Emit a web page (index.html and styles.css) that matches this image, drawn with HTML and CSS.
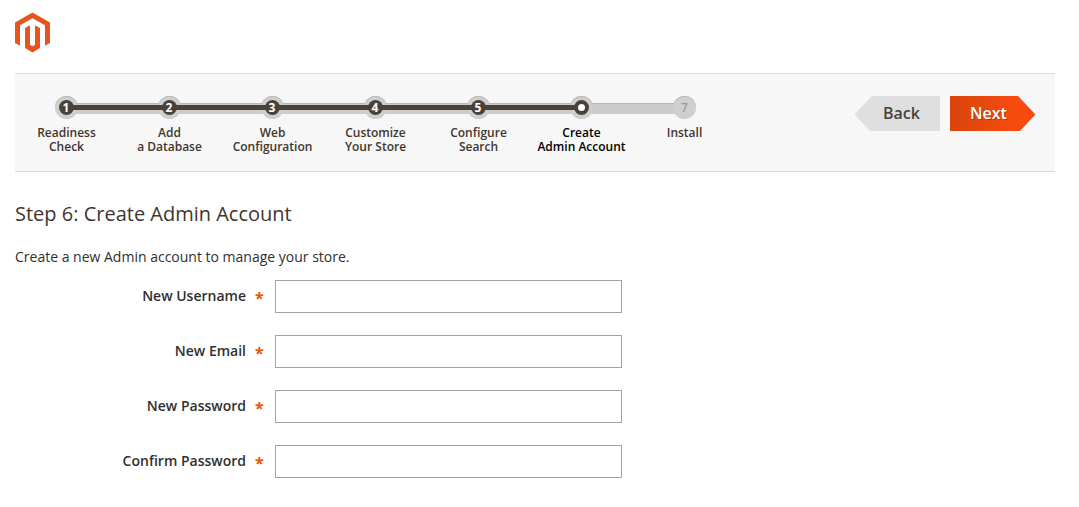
FILE: index.html
```
<!DOCTYPE html>
<html lang="en">
<head>
<meta charset="utf-8">
<title>Create Admin Account</title>
<link rel="stylesheet" href="styles.css">
</head>
<body>
<header class="logo">
  <svg width="35" height="41" viewBox="0 0 35 41" fill="#e85420" aria-label="Magento">
    <path d="M17.5.5 35 10.6V31l-5 2.7V13.3L17.5 6.3 5 13.3v20.4L0 31V10.6Z"/>
    <path d="M10 16 15 13.2V32.7L17.5 34.2 20 32.7V13.2L25 16V36.1L17.5 40.4 10 36.1Z"/>
  </svg>
</header>
<nav class="bar">
  <ol class="steps">
    <li class="step done"><span class="dot"><b>1</b></span><span class="name">Readiness<br>Check</span></li>
    <li class="step done"><span class="dot"><b>2</b></span><span class="name">Add<br>a Database</span></li>
    <li class="step done"><span class="dot"><b>3</b></span><span class="name">Web<br>Configuration</span></li>
    <li class="step done"><span class="dot"><b>4</b></span><span class="name">Customize<br>Your Store</span></li>
    <li class="step done"><span class="dot"><b>5</b></span><span class="name">Configure<br>Search</span></li>
    <li class="step active"><span class="dot"><b></b></span><span class="name">Create<br>Admin Account</span></li>
    <li class="step"><span class="dot"><b>7</b></span><span class="name">Install</span></li>
  </ol>
  <div class="actions">
    <button class="btn back">Back</button>
    <button class="btn next">Next</button>
  </div>
</nav>
<main>
  <h1 class="title">Step 6: Create Admin Account</h1>
  <p class="intro">Create a new Admin account to manage your store.</p>
  <form class="form">
    <div class="row"><label for="u">New Username</label><span class="req">*</span><input id="u" type="text"></div>
    <div class="row"><label for="e">New Email</label><span class="req">*</span><input id="e" type="text"></div>
    <div class="row"><label for="p">New Password</label><span class="req">*</span><input id="p" type="password"></div>
    <div class="row"><label for="c">Confirm Password</label><span class="req">*</span><input id="c" type="password"></div>
  </form>
</main>
</body>
</html>
```
FILE: styles.css
```
* { box-sizing: border-box; }
body {
  margin: 0;
  padding: 12px 24px 0 15px;
  background: #fff;
  color: #303030;
  font: 14px/19px "Open Sans", "Noto Sans", sans-serif;
}
.logo { height: 61px; }
.logo svg { display: block; }
.bar {
  display: flex;
  justify-content: space-between;
  height: 99px;
  padding: 22px 20px 0 0;
  background: #f7f7f7;
  border-top: 1px solid #dcdcdc;
  border-bottom: 1px solid #dcdcdc;
}
.steps {
  display: flex;
  margin: 0;
  padding: 0;
  list-style: none;
}
.step {
  position: relative;
  display: flex;
  flex-direction: column;
  align-items: center;
  width: 103px;
}
/* track behind the markers, drawn towards the next step */
.step:not(:last-child)::before {
  content: "";
  position: absolute;
  top: 7px;
  left: 51px;
  width: 104px;
  height: 10px;
  background: #ccc;
  border-top: 1px solid #b5b5b5;
}
.step.done::after {
  content: "";
  position: absolute;
  z-index: 2;
  top: 9px;
  left: 51px;
  width: 104px;
  height: 5px;
  background: #4a4239;
}
.dot {
  position: relative;
  z-index: 1;
  display: grid;
  place-items: center;
  width: 23px;
  height: 23px;
  border-radius: 50%;
  background: #cfcfcf;
  box-shadow: inset 0 1px 0 #bababa;
}
.done .dot, .active .dot { z-index: auto; }
.dot b {
  position: relative;
  z-index: 3;
  width: 15px;
  height: 15px;
  border-radius: 50%;
  color: #9c9c9c;
  font-size: 12px;
  font-weight: 600;
  line-height: 15px;
  text-align: center;
}
.done b { padding-right: 1px; background: #4a4239; color: #fff; font-weight: 700; }
.active b { background: #fff; border: 4px solid #4a4239; }
.name {
  margin-top: 7px;
  color: #41362f;
  font-size: 12px;
  font-weight: 600;
  line-height: 14px;
  text-align: center;
  white-space: nowrap;
}
.active .name { color: #000; }
.actions { display: flex; gap: 10px; }
.btn {
  width: 85px;
  height: 35px;
  padding: 0;
  border: 0;
  font: 600 16px/35px "Open Sans", "Noto Sans", sans-serif;
}
.back {
  padding-left: 8px;
  background: #dfdfdf;
  color: #4a4239;
  clip-path: polygon(17px 0, 100% 0, 100% 100%, 15px 100%, 0 19px, 0 18px);
}
.next {
  padding-right: 8px;
  background: linear-gradient(to right, #d9450b, #f84b0e 80%);
  color: #fff;
  text-shadow: 1px 1px 0 rgba(0, 0, 0, .25);
  clip-path: polygon(0 0, 68px 0, 85px 18px, 85px 19px, 70px 100%, 0 100%);
}
.title {
  margin: 28px 0 0;
  color: #41362f;
  font-size: 20px;
  font-weight: 400;
  line-height: 28px;
}
.intro { margin: 19px 0 14px; }
.form { display: grid; gap: 22px; }
.row {
  display: grid;
  grid-template-columns: 231px 29px 347px;
  height: 33px;
}
.row label {
  font-weight: 600;
  line-height: 32px;
  text-align: right;
}
.req {
  padding-left: 9px;
  color: #eb5202;
  font-size: 16px;
  font-weight: 700;
  line-height: 36px;
}
.row input {
  width: 347px;
  height: 33px;
  padding: 0 9px;
  border: 1px solid #a3a3a3;
  border-radius: 0;
  background: #fff;
  font: inherit;
}
```
